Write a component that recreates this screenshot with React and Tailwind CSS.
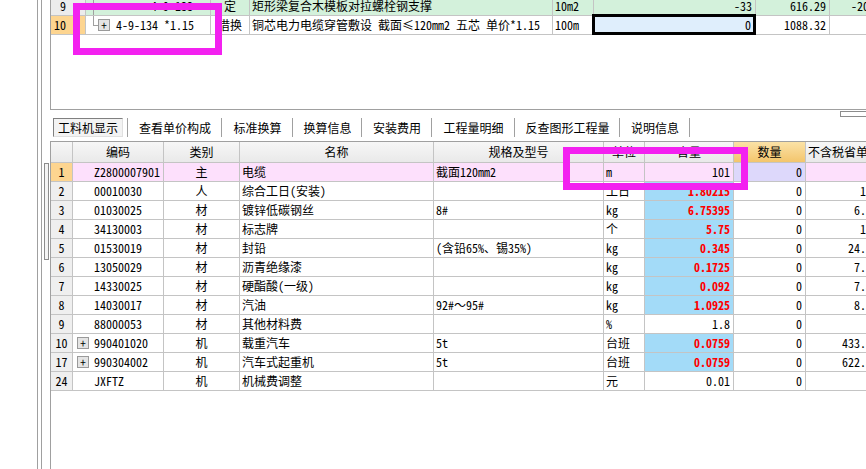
import {useState} from "react";

const font = "font-['Noto_Sans_Mono_CJK_SC','Noto_Sans_CJK_SC',sans-serif]";

const topCols = "grid grid-cols-[35px_125px_39px_303px_41px_162px_74px_80px]";
const cols = "grid grid-cols-[22px_91px_76px_194px_170px_41px_89px_72px_70px]";
const line = "border-r border-b border-[#c4c4c4]";

const tabs = [
    {label: '查看单价构成', w: 'w-[92px]'},
    {label: '标准换算', w: 'w-[69px]'},
    {label: '换算信息', w: 'w-[67px]'},
    {label: '安装费用', w: 'w-[68px]'},
    {label: '工程量明细', w: 'w-[81px]'},
    {label: '反查图形工程量', w: 'w-[103px]'},
    {label: '说明信息', w: 'w-[68px]'},
];

const rows = [
    {n: '1', code: 'Z2800007901', type: '主', name: '电缆', spec: '截面120mm2', unit: 'm', qty: '101', price: '', main: true},
    {n: '2', code: '00010030', type: '人', name: '综合工日(安装)', spec: '', unit: '工日', qty: '1.80215', red: true, price: '11'},
    {n: '3', code: '01030025', type: '材', name: '镀锌低碳钢丝', spec: '8#', unit: 'kg', qty: '6.75395', red: true, price: '6.5'},
    {n: '4', code: '34130003', type: '材', name: '标志牌', spec: '', unit: '个', qty: '5.75', red: true, price: '11'},
    {n: '5', code: '01530019', type: '材', name: '封铅', spec: '(含铅65%、锡35%)', unit: 'kg', qty: '0.345', red: true, price: '24.1'},
    {n: '6', code: '13050029', type: '材', name: '沥青绝缘漆', spec: '', unit: 'kg', qty: '0.1725', red: true, price: '7.7'},
    {n: '7', code: '14330025', type: '材', name: '硬酯酸(一级)', spec: '', unit: 'kg', qty: '0.092', red: true, price: '7.4'},
    {n: '8', code: '14030017', type: '材', name: '汽油', spec: '92#～95#', unit: 'kg', qty: '1.0925', red: true, price: '8.3'},
    {n: '9', code: '88000053', type: '材', name: '其他材料费', spec: '', unit: '%', qty: '1.8', price: ''},
    {n: '10', code: '990401020', type: '机', name: '载重汽车', spec: '5t', unit: '台班', qty: '0.0759', red: true, price: '433.1', tree: true},
    {n: '17', code: '990304002', type: '机', name: '汽车式起重机', spec: '5t', unit: '台班', qty: '0.0759', red: true, price: '622.8', tree: true},
    {n: '24', code: 'JXFTZ', type: '机', name: '机械费调整', spec: '', unit: '元', qty: '0.01', price: ''},
];

function PlusBox() {
    return (
        <span className="w-[12px] h-[12px] border border-[#9a9a9a] bg-[#e4e4e4] flex items-center justify-center text-[11px] leading-none text-black shrink-0">+</span>
    );
}

function HeadCell({children, className = ''}) {
    return (
        <div className={`${line} h-[21px] flex items-center justify-center bg-gradient-to-b from-[#f7f7f7] to-[#e9e9e9] whitespace-nowrap overflow-hidden ${className}`}>
            {children}
        </div>
    );
}

export default function App() {
    const [tab, setTab] = useState(0);
    return (
        <div className={`${font} relative w-[866px] h-[469px] overflow-hidden bg-white flex text-[12px] text-black leading-[18px]`}>
            <div className="w-[37px] shrink-0 bg-white"/>
            <div className="w-[13px] shrink-0 border-l border-[#a0a0a0] bg-white flex">
                <div className="ml-[3px] flex-1 border-l border-[#a0a0a0] flex flex-col">
                    <div className="mt-[163px] ml-[2px] w-[5px] h-[97px] border border-[#8c8c8c] bg-[#f4f4f4]"/>
                </div>
            </div>

            <div className="flex-1 flex flex-col min-w-0">
                {/* top panel */}
                <div className="h-[110px] shrink-0 border-l border-b border-[#a0a0a0] overflow-hidden">
                    <div className="mt-[-3px] w-[900px]">
                        <div className={`${topCols} h-[19px]`}>
                            <div className={`${line} bg-[#ececec] text-right pr-[19px]`}>9</div>
                            <div className={`${line} bg-[#d3f1db] relative pl-[65px] whitespace-nowrap`}>
                                <span className="absolute left-[7px] top-0 bottom-0 border-l border-[#a0a0a0]"/>
                                4-9-133
                            </div>
                            <div className={`${line} bg-[#d3f1db] text-center`}>定</div>
                            <div className={`${line} bg-[#d3f1db] pl-[2px] whitespace-nowrap`}>矩形梁复合木模板对拉螺栓钢支撑</div>
                            <div className={`${line} bg-[#d3f1db] pl-[2px]`}>10m2</div>
                            <div className={`${line} bg-[#d3f1db] text-right pr-[3px]`}>-33</div>
                            <div className={`${line} bg-[#d3f1db] text-right pr-[3px]`}>616.29</div>
                            <div className={`${line} bg-[#d3f1db] pl-[21px]`}>-20</div>
                        </div>
                        <div className={`${topCols} h-[19px]`}>
                            <div className={`${line} bg-[#fdd590] text-right pr-[19px]`}>10</div>
                            <div className={`${line} bg-white relative flex items-center pl-[12px] gap-[6px] whitespace-nowrap`}>
                                <span className="absolute left-[7px] top-0 h-[10px] w-[5px] border-l border-b border-[#a0a0a0]"/>
                                <PlusBox/>
                                <span>4-9-134 *1.15</span>
                            </div>
                            <div className={`${line} bg-white text-center`}>借换</div>
                            <div className={`${line} bg-white pl-[2px] whitespace-nowrap`}>铜芯电力电缆穿管敷设 截面≤120mm2 五芯 单价*1.15</div>
                            <div className={`${line} bg-white pl-[2px]`}>100m</div>
                            <div className={`${line} bg-[#dfeefc] text-right pr-[4px] relative`}>
                                <span className="absolute -left-[2px] -top-[2px] -right-[1px] -bottom-[1px] border-[3px] border-black"/>
                                0
                            </div>
                            <div className={`${line} bg-white text-right pr-[3px]`}>1088.32</div>
                            <div className={`${line} bg-white`}/>
                        </div>
                    </div>
                </div>

                {/* tab bar */}
                <div className="h-[31px] shrink-0 bg-white relative flex items-start pt-[8px] pl-[3px]">
                    <button onClick={() => setTab(0)}
                            className={`w-[70px] h-[19px] flex items-center justify-center text-[12px] ${tab === 0 ? 'border border-t-[#808080] border-l-[#808080] border-b-[#e0e0e0] border-r-[#e0e0e0] bg-[#f3f3f3]' : ''}`}>
                        工料机显示
                    </button>
                    <div className="ml-[4px] w-[2px] h-[19px] border-l border-[#a0a0a0] border-r border-r-white"/>
                    {tabs.map((t, i) => (
                        <div key={t.label} className="flex">
                            <button onClick={() => setTab(i + 1)}
                                    className={`${t.w} h-[19px] flex items-center justify-center text-[12px] whitespace-nowrap`}>
                                {t.label}
                            </button>
                            <div className="w-[2px] h-[19px] border-l border-[#a0a0a0] border-r border-r-white"/>
                        </div>
                    ))}
                    <div className="absolute right-0 top-[1px] w-[26px] h-[6px] border border-[#8c8c8c] border-r-0 bg-white"/>
                </div>

                {/* bottom grid */}
                <div className="flex-1 border-l border-t border-[#a0a0a0] overflow-hidden">
                    <div className="w-[900px]">
                        <div className={cols}>
                            <HeadCell/>
                            <HeadCell>编码</HeadCell>
                            <HeadCell>类别</HeadCell>
                            <HeadCell>名称</HeadCell>
                            <HeadCell>规格及型号</HeadCell>
                            <HeadCell>单位</HeadCell>
                            <HeadCell>含量</HeadCell>
                            <HeadCell className="!from-[#fbe2a6] !to-[#f3c56c]">数量</HeadCell>
                            <HeadCell className="!justify-start pl-[2px]">不含税省单价</HeadCell>
                        </div>
                        {rows.map((r) => {
                            const bg = r.main ? 'bg-[#fde0fc]' : 'bg-white';
                            return (
                                <div key={r.n} className={`${cols} h-[19px]`}>
                                    <div className={`${line} ${r.main ? 'bg-[#fdd590]' : 'bg-[#efefef]'} text-center`}>{r.n}</div>
                                    <div className={`${line} ${bg} flex items-center gap-[5px] ${r.tree ? 'pl-[4px]' : 'pl-[21px]'} whitespace-nowrap`}>
                                        {r.tree && <PlusBox/>}
                                        <span>{r.code}</span>
                                    </div>
                                    <div className={`${line} ${bg} text-center`}>{r.type}</div>
                                    <div className={`${line} ${bg} pl-[2px] whitespace-nowrap`}>{r.name}</div>
                                    <div className={`${line} ${bg} pl-[2px] whitespace-nowrap`}>{r.spec}</div>
                                    <div className={`${line} ${bg} pl-[2px]`}>{r.unit}</div>
                                    <div className={`${line} ${r.red ? 'bg-[#a3dbf8] text-[#ff0000] font-bold' : bg} text-right pr-[3px]`}>{r.qty}</div>
                                    <div className={`${line} ${r.main ? 'bg-[#ddd8fb]' : 'bg-white'} text-right pr-[3px]`}>0</div>
                                    <div className={`${line} ${bg} text-right pr-[3px] whitespace-nowrap`}>{r.price}</div>
                                </div>
                            );
                        })}
                    </div>
                </div>
            </div>

            {/* annotation boxes */}
            <div className="absolute left-[73px] top-[3px] w-[149px] h-[52px] border-[7px] border-[#f321f0]"/>
            <div className="absolute left-[563px] top-[147px] w-[185px] h-[43px] border-[7px] border-[#f321f0]"/>
        </div>
    );
}
